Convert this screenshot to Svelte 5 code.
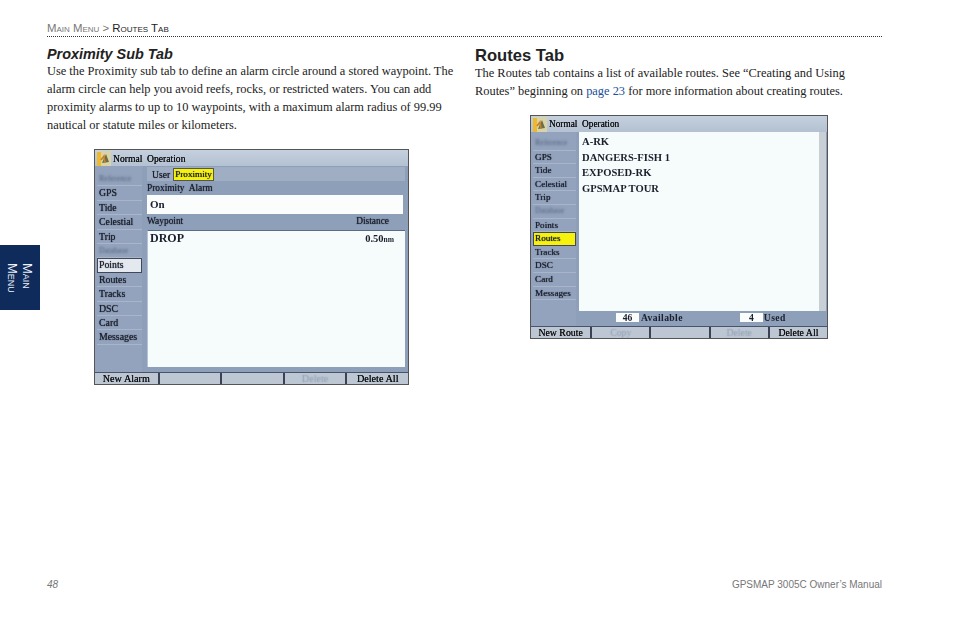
<script>
  const menu = ['Reference', 'GPS', 'Tide', 'Celestial', 'Trip', 'Database', 'Points', 'Routes', 'Tracks', 'DSC', 'Card', 'Messages']
  const dimmed = ['Reference', 'Database']
  const routes = ['A-RK', 'DANGERS-FISH 1', 'EXPOSED-RK', 'GPSMAP TOUR']
  const alarmButtons = [
    { label: 'New Alarm' },
    { label: '' },
    { label: '' },
    { label: 'Delete', off: true },
    { label: 'Delete All' }
  ]
  const routeButtons = [
    { label: 'New Route' },
    { label: 'Copy', off: true },
    { label: '' },
    { label: 'Delete', off: true },
    { label: 'Delete All' }
  ]
</script>

{#snippet titlebar()}
  <div class="titlebar">
    <svg class="appicon" viewBox="0 0 14 15" width="14" height="15">
      <rect width="14" height="15" fill="#d9d3a8" />
      <rect x="0" y="1" width="4" height="14" fill="#eeb92a" />
      <path d="M5 12 L9 3 L12 11 Z" fill="#6b7048" />
      <path d="M4 9 L7 5 L8 12" stroke="#c9802a" stroke-width="1.6" fill="none" />
    </svg>
    <span>Normal&nbsp; Operation</span>
  </div>
{/snippet}

{#snippet sidebar(active, selected)}
  <ul class="menu">
    {#each menu as item}
      <li class:dim={dimmed.includes(item)} class:active={item === active} class:selected={item === selected}>
        {item}
      </li>
    {/each}
  </ul>
{/snippet}

{#snippet softkeys(buttons)}
  <div class="softkeys">
    {#each buttons as b}
      <div class="key" class:off={b.off}>{b.label}</div>
    {/each}
  </div>
{/snippet}

<div class="page">
  <header class="crumb">
    <span class="grey">Main Menu &gt;</span> <span>Routes Tab</span>
  </header>

  <div class="columns">
    <section class="left">
      <h3>Proximity Sub Tab</h3>
      <p>
        Use the Proximity sub tab to define an alarm circle around a stored waypoint. The<br />
        alarm circle can help you avoid reefs, rocks, or restricted waters. You can add<br />
        proximity alarms to up to 10 waypoints, with a maximum alarm radius of 99.99<br />
        nautical or statute miles or kilometers.
      </p>

      <div class="screen prox">
        {@render titlebar()}
        <div class="body">
          {@render sidebar('Points', '')}
          <div class="main">
            <div class="tabs">
              <span>User</span>
              <span class="tab-on">Proximity</span>
            </div>
            <div class="label">Proximity&nbsp; Alarm</div>
            <div class="field">On</div>
            <div class="label split"><span>Waypoint</span><span class="dist">Distance</span></div>
            <div class="list">
              <div class="row"><span>DROP</span><span class="val">0.50<small>nm</small></span></div>
            </div>
          </div>
        </div>
        {@render softkeys(alarmButtons)}
      </div>
    </section>

    <section class="right">
      <h2>Routes Tab</h2>
      <p>
        The Routes tab contains a list of available routes. See “Creating and Using<br />
        Routes” beginning on <span class="link">page 23</span> for more information about creating routes.
      </p>

      <div class="screen rts">
        {@render titlebar()}
        <div class="body">
          {@render sidebar('', 'Routes')}
          <div class="main">
            <div class="list routes">
              {#each routes as r}
                <div class="route">{r}</div>
              {/each}
              <div class="scroll"></div>
            </div>
            <div class="counts">
              <span class="num">46</span><span class="cap">Available</span>
              <span class="num n2">4</span><span class="cap c2">Used</span>
            </div>
          </div>
        </div>
        {@render softkeys(routeButtons)}
      </div>
    </section>
  </div>

  <footer class="foot">
    <em>48</em>
    <span>GPSMAP 3005C Owner’s Manual</span>
  </footer>

  <aside class="sidetab"><span>Main<br />Menu</span></aside>
</div>

<style>
  :global(body) {
    margin: 0;
    background: #fff;
  }

  .page {
    position: relative;
    width: 954px;
    height: 621px;
    padding: 22px 72px 0 47px;
    box-sizing: border-box;
    display: flex;
    flex-direction: column;
    font-family: "Liberation Serif", serif;
    color: #222;
    overflow: hidden;
  }

  .crumb {
    height: 14px;
    line-height: 13px;
    font-family: "Liberation Sans", sans-serif;
    font-size: 11.4px;
    font-variant: small-caps;
    color: #222;
    border-bottom: 1px dotted #333;
  }
  .crumb .grey {
    color: #777;
  }

  .columns {
    display: flex;
    flex: 1;
    padding-top: 9px;
  }
  .left {
    width: 428px;
  }

  h3 {
    margin: 0;
    height: 16px;
    font: italic bold 14.4px/17px "Liberation Sans", sans-serif;
    color: #222;
  }
  h2 {
    margin: 0;
    height: 18px;
    font: bold 16.6px/19px "Liberation Sans", sans-serif;
    color: #222;
  }

  p {
    margin: 0;
    font-size: 12.4px;
    line-height: 18px;
    white-space: nowrap;
  }
  .link {
    color: #1c4f9c;
  }

  .screen {
    display: flex;
    flex-direction: column;
    box-sizing: border-box;
    border: 1px solid #555;
    background: #93a3bd;
    color: #1a1f2c;
    filter: blur(0.35px);
  }
  .screen.prox {
    width: 315px;
    height: 236px;
    margin: 15px 0 0 47px;
  }
  .screen.rts {
    width: 298px;
    height: 224px;
    margin: 15px 0 0 55px;
  }

  .titlebar {
    display: flex;
    align-items: center;
    gap: 2px;
    height: 16px;
    padding-left: 2px;
    background: linear-gradient(#c5d0de, #b3c1d2);
    font-size: 9.6px;
    color: #111;
    flex: none;
    text-shadow: 0 0 0.6px #111;
  }
  .rts .titlebar {
    font-size: 9.3px;
  }

  .body {
    flex: 1;
    display: flex;
    min-height: 0;
  }

  .menu {
    list-style: none;
    margin: 0;
    padding: 6px 0 0 2px;
    width: 45px;
    flex: none;
    font-size: 9.8px;
  }
  .menu li {
    box-sizing: border-box;
    height: 14.4px;
    line-height: 13px;
    padding-left: 2px;
    border-bottom: 1px solid #a9b6ca;
    white-space: nowrap;
    text-shadow: 0 0 1px #1a1f2c;
  }
  .rts .menu {
    width: 43px;
    padding-top: 5px;
    font-size: 9.2px;
  }
  .rts .menu li {
    height: 13.6px;
    line-height: 12.5px;
  }
  .menu li.dim {
    color: transparent;
    font-size: 8px;
    text-shadow: 0 0 2.5px #4f5d78;
  }
  .menu li.active {
    background: #e4e9ef;
    outline: 1px solid #40485a;
    outline-offset: -1px;
  }
  .menu li.selected {
    background: #f6f20e;
    outline: 1px solid #40485a;
    outline-offset: -1px;
  }

  .main {
    flex: 1;
    display: flex;
    flex-direction: column;
    padding: 1px 3px 5px 5px;
    min-width: 0;
    background: #8e9fb9;
  }
  .rts .main {
    padding: 0 1px 3px 3px;
  }

  .tabs {
    display: flex;
    align-items: center;
    gap: 3px;
    height: 14px;
    padding-left: 5px;
    font-size: 9.6px;
    background: #a0aec4;
    flex: none;
    text-shadow: 0 0 0.8px #1a1f2c;
  }
  .tab-on {
    background: #f6f20e;
    border: 1px solid #555;
    padding: 0 1px;
    line-height: 11px;
    font-size: 9.2px;
  }

  .label {
    height: 14px;
    line-height: 14px;
    font-size: 9.4px;
    flex: none;
    text-shadow: 0 0 1px #1a1f2c;
  }
  .split {
    display: flex;
    justify-content: space-between;
    height: 16px;
  }
  .dist {
    padding-right: 16px;
  }

  .field {
    height: 19px;
    line-height: 19px;
    padding-left: 3px;
    background: #fbfdfd;
    font-size: 11px;
    font-weight: bold;
    flex: none;
    margin-right: 2px;
  }

  .list {
    flex: 1;
    background: #f6fbfb;
    border-top: 1px solid #5b6a85;
    border-left: 1px solid #b5c2d3;
    min-height: 0;
  }
  .row {
    display: flex;
    justify-content: space-between;
    padding: 0 11px 0 2px;
    font-size: 12px;
    font-weight: bold;
  }
  .val {
    font-size: 10.5px;
    line-height: 15px;
  }
  .val small {
    font-size: 7.5px;
  }

  .routes {
    position: relative;
    border: 0;
    padding: 2px 1px 0;
  }
  .route {
    height: 15.5px;
    line-height: 15px;
    font-size: 10.6px;
    font-weight: bold;
    padding-left: 2px;
  }
  .scroll {
    position: absolute;
    top: 0;
    right: 0;
    bottom: 0;
    width: 7px;
    background: #c8d0d5;
  }

  .counts {
    display: flex;
    align-items: center;
    height: 11px;
    margin-top: 1px;
    padding-left: 37px;
    font-size: 9.6px;
    font-weight: bold;
    flex: none;
  }
  .num {
    width: 23px;
    background: #fbfdfd;
    text-align: center;
    line-height: 9px;
  }
  .n2 {
    margin-left: 57px;
  }
  .cap {
    margin-left: 2px;
    letter-spacing: 0.4px;
  }
  .c2 {
    margin-left: 1px;
  }

  .softkeys {
    display: grid;
    grid-template-columns: repeat(5, 1fr);
    height: 11px;
    flex: none;
    background: #bdc7d4;
    font-size: 10.2px;
    line-height: 11px;
    color: #111;
    border-top: 1px solid #49536a;
    text-shadow: 0 0 0.6px #111;
  }
  .rts .softkeys {
    font-size: 9.8px;
  }
  .key {
    text-align: center;
    white-space: nowrap;
    border-left: 2px solid #3b4254;
  }
  .key:first-child {
    border-left: 0;
  }
  .key.off {
    color: transparent;
    text-shadow: 0 0 1.5px #8a97ac;
  }

  .foot {
    display: flex;
    justify-content: space-between;
    height: 43px;
    font: 10px/14px "Liberation Sans", sans-serif;
    color: #777;
  }

  .sidetab {
    position: absolute;
    left: 0;
    top: 245px;
    width: 40px;
    height: 65px;
    box-sizing: border-box;
    padding-top: 18px;
    background: #0f2b5b;
    display: flex;
    justify-content: center;
  }
  .sidetab span {
    writing-mode: vertical-rl;
    color: #eef2f8;
    font: 13px/15px "Liberation Sans", sans-serif;
    font-variant: small-caps;
  }
</style>
